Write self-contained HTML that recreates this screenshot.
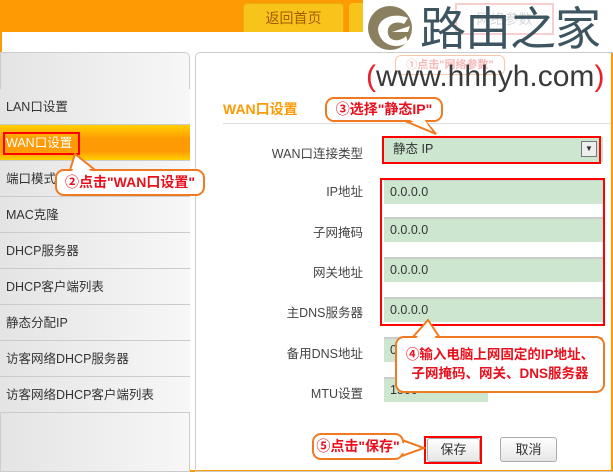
<!DOCTYPE html><html><head><meta charset="utf-8"><style>
*{margin:0;padding:0;box-sizing:border-box}
body{width:613px;height:472px;position:relative;overflow:hidden;background:#fff;font-family:"Liberation Sans","Noto Sans CJK SC",sans-serif;font-size:12px;color:#333}
.a{position:absolute}
.side div{position:absolute;left:0;width:190px;height:36px;border-bottom:1px solid #ccc;background:linear-gradient(90deg,#e4e4e4,#f7f7f7);padding-left:6px;line-height:36px;font-size:12.5px}
.lbl{position:absolute;right:250px;width:120px;text-align:right;font-size:12.5px;color:#444}
.inp{position:absolute;left:384px;width:219px;height:25px;background:#cde6cf;border-top:2px solid #ccc;font-size:12.5px;padding-left:6px;line-height:23px;color:#333}
.call{position:absolute;background:#fff;border:2px solid #f07a22;border-radius:9px;color:#e8101c;font-weight:bold;font-size:14px;text-align:center;white-space:nowrap}
.red{position:absolute;border:2px solid #f00}
</style></head><body>
<div class="a" style="left:0;top:0;width:613px;height:32px;background:#fe9a04"></div>
<div class="a" style="left:243px;top:3px;width:101px;height:29px;background:#f8c41c;border:1px solid #e8ad10;border-bottom:none;border-radius:4px 4px 0 0;text-align:center;line-height:29px;font-size:14px;color:#a35a00">返回首页</div>
<div class="a" style="left:349px;top:3px;width:60px;height:29px;background:#f8c41c;border-radius:4px 4px 0 0"></div>
<div class="a" style="left:0;top:32px;width:2px;height:440px;background:#fe9a04"></div>
<div class="a" style="left:0;top:470px;width:613px;height:2px;background:#fe9a04"></div>
<div class="a" style="left:611px;top:32px;width:2px;height:440px;background:#fe9a04"></div>
<div class="a" style="left:0;top:52px;width:190px;height:420px;border:1px solid #ccc;border-radius:0 5px 0 0;background:linear-gradient(90deg,#e4e4e4,#f7f7f7)"></div>
<div class="side">
<div style="top:89px">LAN口设置</div>
<div style="top:125px;background:linear-gradient(#ffd000,#fe9a04 40%,#fe9a04 75%,#ffd000);color:#fff">WAN口设置</div>
<div style="top:161px">端口模式</div>
<div style="top:197px">MAC克隆</div>
<div style="top:233px">DHCP服务器</div>
<div style="top:269px">DHCP客户端列表</div>
<div style="top:305px">静态分配IP</div>
<div style="top:341px">访客网络DHCP服务器</div>
<div style="top:377px">访客网络DHCP客户端列表</div>
</div>
<div class="red" style="left:3px;top:132px;width:77px;height:23px"></div>
<div class="a" style="left:195px;top:52px;width:420px;height:420px;border:1px solid #ccc;border-radius:5px 0 0 0"></div>
<div class="a" style="left:223px;top:99px;font-size:14px;color:#fe9a04;font-weight:bold">WAN口设置</div>
<div class="a" style="left:223px;top:123px;width:388px;height:1px;background:#ddd"></div>
<div class="lbl" style="top:143px">WAN口连接类型</div>
<div class="lbl" style="top:181px">IP地址</div>
<div class="lbl" style="top:222px">子网掩码</div>
<div class="lbl" style="top:262px">网关地址</div>
<div class="lbl" style="top:302px">主DNS服务器</div>
<div class="lbl" style="top:343px">备用DNS地址</div>
<div class="lbl" style="top:383px">MTU设置</div>
<div class="inp" style="top:137px;height:25px;border:none;padding-left:9px;line-height:25px">静态 IP<span class="a" style="right:6px;top:4px;width:16px;height:16px;border:1px solid #777;background:#eee;font-size:8px;line-height:14px;text-align:center">▼</span></div>
<div class="red" style="left:382px;top:136px;width:219px;height:28px"></div>
<div class="inp" style="top:179px">0.0.0.0</div>
<div class="inp" style="top:217px">0.0.0.0</div>
<div class="inp" style="top:257px">0.0.0.0</div>
<div class="inp" style="top:297px">0.0.0.0</div>
<div class="red" style="left:380px;top:178px;width:225px;height:148px"></div>
<div class="inp" style="top:337px">0</div>
<div class="inp" style="top:377px;width:104px">1500</div>
<div class="a" style="left:427px;top:438px;width:53px;height:24px;border:1px solid #aaa;border-radius:3px;background:linear-gradient(#fff,#e6e6e6);text-align:center;line-height:22px;font-size:13px">保存</div>
<div class="red" style="left:424px;top:436px;width:58px;height:28px"></div>
<div class="a" style="left:500px;top:437px;width:57px;height:25px;border:1px solid #aaa;border-radius:3px;background:linear-gradient(#fff,#e6e6e6);text-align:center;line-height:23px;font-size:13px">取消</div>
<div class="a" style="left:363px;top:0;width:250px;height:52px;background:#fff"></div>
<div class="a" style="left:455px;top:3px;width:99px;height:32px;border:2px solid #f5b0b0;color:#bbb;font-size:14px;line-height:28px;text-align:center;opacity:.6">网络参数</div>
<svg class="a" style="left:364px;top:4px" width="56" height="48" viewBox="0 0 56 48"><circle cx="26" cy="24" r="22" fill="#8a7f5e"/><path d="M14 26 C14 14 30 8 44 14 L40 20 C32 16 22 20 24 30 C26 38 36 38 42 32 L44 38 C34 46 16 42 14 26Z" fill="#fff"/><path d="M28 28 L46 22 L44 28 Z" fill="#fff"/></svg>
<div class="a" style="left:420px;top:1px;font-size:46px;line-height:50px;color:#3d5560;font-family:'Noto Sans CJK SC',sans-serif;letter-spacing:-1px">路由之家</div>
<div class="a" style="left:395px;top:55px;width:110px;height:20px;border:1px solid #f8c8a8;border-radius:6px;color:#f8b8b8;font-size:11px;text-align:center;line-height:18px;font-weight:bold">①点击"网络参数"</div>
<div class="a" style="left:366px;top:60px;font-size:30px;line-height:34px;color:#3a3a3a;white-space:nowrap"><span style="color:#e8202a">(</span>www.hhhyh.com<span style="color:#e8202a">)</span></div>
<svg class="a" style="left:0;top:0" width="613" height="472"><g fill="#fff" stroke="#f07a22" stroke-width="2"><path d="M70 170 L75 154 L95 170Z"/><path d="M405 121 L436 134 L425 121Z"/><path d="M412 338 L428 320 L440 338Z"/><path d="M402 440 L424 448 L402 456Z"/></g></svg>
<div class="call" style="left:55px;top:169px;width:150px;height:27px;line-height:23px">②点击"WAN口设置"</div>
<div class="call" style="left:325px;top:97px;width:118px;height:25px;line-height:21px">③选择"静态IP"</div>
<div class="call" style="left:395px;top:336px;width:210px;height:57px;line-height:19px;padding-top:7px;font-size:13.5px">④输入电脑上网固定的IP地址、<br>子网掩码、网关、DNS服务器</div>
<div class="call" style="left:312px;top:433px;width:92px;height:27px;line-height:23px">⑤点击"保存"</div>
<svg class="a" style="left:0;top:0" width="613" height="472"><g fill="#fff"><path d="M72 172 L76 158 L92 172Z"/><path d="M408 119 L432 131 L424 119Z"/><path d="M415 340 L427 324 L437 340Z"/><path d="M400 442 L420 448 L400 454Z"/></g></svg>
</body></html>
